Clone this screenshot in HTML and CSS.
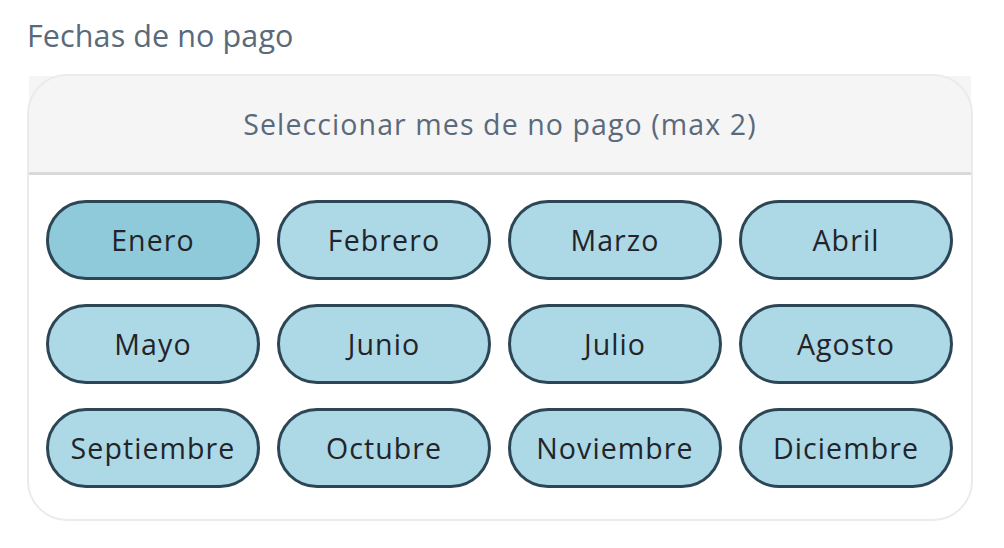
FILE: index.html
```html
<!DOCTYPE html>
<html lang="es">
<head>
<meta charset="utf-8">
<title>Fechas de no pago</title>
<link rel="stylesheet" href="styles.css">
</head>
<body>
<div class="page">
  <h2 class="title">Fechas de no pago</h2>
  <div class="card">
    <div class="card-header">Seleccionar mes de no pago (max 2)</div>
    <div class="months">
      <button class="month active">Enero</button>
      <button class="month">Febrero</button>
      <button class="month">Marzo</button>
      <button class="month">Abril</button>
      <button class="month">Mayo</button>
      <button class="month">Junio</button>
      <button class="month">Julio</button>
      <button class="month">Agosto</button>
      <button class="month">Septiembre</button>
      <button class="month">Octubre</button>
      <button class="month">Noviembre</button>
      <button class="month">Diciembre</button>
    </div>
  </div>
</div>
</body>
</html>
```

FILE: styles.css
```css
html, body {
  margin: 0;
  padding: 0;
  background: #ffffff;
}

body {
  font-family: "Open Sans", "Noto Sans", sans-serif;
}

.page {
  padding: 13px 31px 0 27px;
}

.title {
  margin: 0 0 17px 0;
  font-size: 30.5px;
  font-weight: 500;
  line-height: 44px;
  color: #596a7b;
  letter-spacing: 0.1px;
}

.card {
  position: relative;
  width: 946px;
  box-sizing: border-box;
  border: 2px solid transparent;
  border-radius: 40px;
}

/* rounded frame drawn over the square header background */
.card::after {
  content: "";
  position: absolute;
  inset: -2px;
  border: 2px solid #ebebeb;
  border-radius: 40px;
  pointer-events: none;
}

.card-header {
  background: #f5f5f5;
  border-bottom: 3px solid #d9d9d9;
  height: 96px;
  display: flex;
  align-items: center;
  justify-content: center;
  font-size: 28.5px;
  font-weight: 500;
  color: #5a6a7b;
  letter-spacing: 1.1px;
}

.months {
  display: grid;
  grid-template-columns: repeat(4, 1fr);
  column-gap: 17px;
  row-gap: 24px;
  padding: 25px 18px 31px 17px;
}

.month {
  height: 80px;
  border: 3px solid #2c4655;
  border-radius: 40px;
  background: #add8e6;
  color: #222429;
  font-family: "Open Sans", "Noto Sans", sans-serif;
  font-size: 28.5px;
  font-weight: 500;
  letter-spacing: 1.1px;
  padding: 0;
  cursor: pointer;
}

.month.active {
  background: #8fcadb;
}
```
